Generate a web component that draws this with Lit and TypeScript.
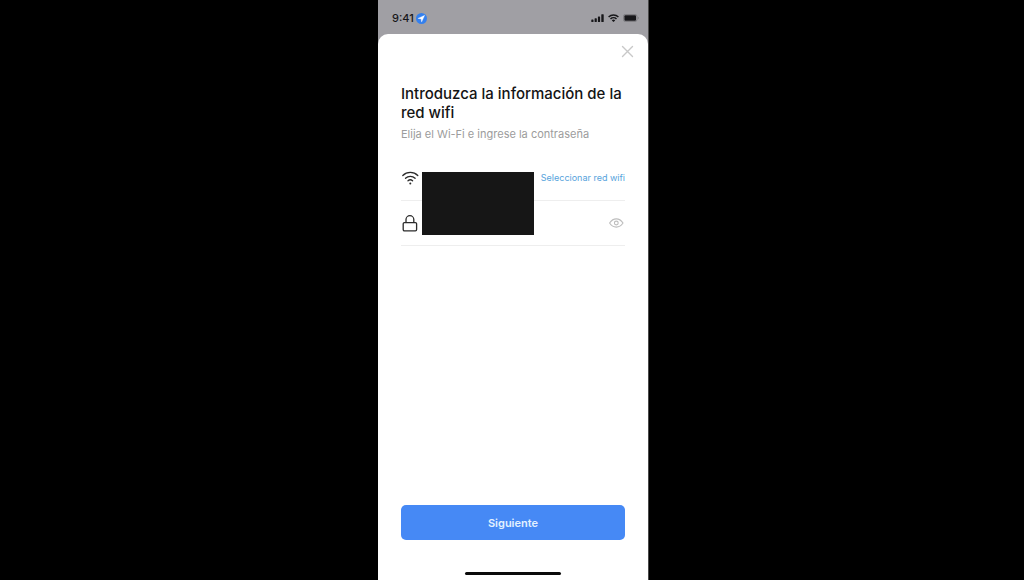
import { LitElement, html, css } from "lit";
import { customElement, state } from "lit/decorators.js";

@customElement("status-bar")
class StatusBar extends LitElement {
  static styles = css`
    :host {
      display: flex;
      align-items: center;
      height: 34px;
      padding: 2px 9px 0 14px;
      box-sizing: border-box;
      color: #17171a;
    }
    .time {
      font-size: 11px;
      line-height: 14px;
      font-weight: 500;
    }
    .location {
      margin-left: 2px;
    }
    .signals {
      display: flex;
      align-items: center;
      gap: 4px;
      margin-left: auto;
    }
    svg {
      display: block;
    }
  `;

  render() {
    return html`
      <span class="time">9:41</span>
      <svg class="location" width="11" height="11" viewBox="0 0 11 11" aria-hidden="true">
        <circle cx="5.5" cy="5.5" r="5.5" fill="#3480ee" />
        <path d="M8.7 2.3 1.9 5.4l3.2.5.5 3.2z" fill="#fff" stroke="#fff" stroke-width="0.3" />
      </svg>
      <div class="signals">
        <svg width="13" height="8" viewBox="0 0 13 8" fill="currentColor" aria-hidden="true">
          <rect x="0.3" y="5.4" width="2.2" height="2.6" rx="0.6" />
          <rect x="3.6" y="4.2" width="2.2" height="3.8" rx="0.6" />
          <rect x="6.9" y="2.4" width="2.2" height="5.6" rx="0.6" />
          <rect x="10.3" y="0.2" width="2.4" height="7.8" rx="0.6" />
        </svg>
        <svg width="11" height="8" viewBox="0 0 11 8" fill="none" stroke="currentColor" stroke-width="1.5" aria-hidden="true">
          <path d="M.6 3a7 7 0 0 1 9.8 0M2.5 5a4.300 4.300 0 0 1 6 0" />
          <path d="M3.800 6.400a2.400 2.400 0 0 1 3.400 0L5.500 8z" fill="currentColor" stroke="none" />
        </svg>
        <svg width="16" height="8" viewBox="0 0 16 8" aria-hidden="true">
          <rect x="0.5" y="0.5" width="13.4" height="7" rx="1.8" fill="none" stroke="#77777b" stroke-width="0.8" />
          <rect x="1.4" y="1.3" width="11.6" height="5.4" rx="1" fill="currentColor" />
          <path d="M14.8 2.8v2.4q.9-.4.9-1.2t-.9-1.2" fill="#77777b" />
        </svg>
      </div>
    `;
  }
}

@customElement("wifi-form")
class WifiForm extends LitElement {
  static styles = css`
    :host {
      display: flex;
      flex-direction: column;
      flex: 1;
      box-sizing: border-box;
      border-radius: 10px 10px 0 0;
      background: #fff;
    }
    button,
    input {
      font: inherit;
      border: 0;
      padding: 0;
      margin: 0;
      background: none;
      color: inherit;
    }
    button {
      cursor: pointer;
    }
    svg {
      display: block;
    }
    .close {
      align-self: flex-end;
      margin: 11px 14px 0 0;
    }
    form {
      display: flex;
      flex-direction: column;
      flex: 1;
      padding: 26px 23px 0;
    }
    h1 {
      margin: 0;
      font-size: 15px;
      line-height: 19px;
      font-weight: 500;
      color: #141414;
    }
    .hint {
      margin: 5px 0 0;
      font-size: 11px;
      line-height: 14px;
      color: #9c9c9c;
    }
    .fields {
      position: relative;
      margin-top: 15px;
    }
    .row {
      display: flex;
      align-items: center;
      height: 45px;
      box-sizing: border-box;
      border-bottom: 1px solid #eeeeee;
    }
    .row label {
      flex: none;
      color: #2b2b2b;
    }
    .row input {
      flex: 1;
      min-width: 0;
      margin: 0 6px;
      height: 24px;
      font-size: 11px;
      outline: none;
    }
    .select {
      flex: none;
      font-size: 9px;
      line-height: 12px;
      color: #57a3dc;
      text-decoration: none;
    }
    .redacted {
      position: absolute;
      left: 21px;
      top: 16px;
      width: 112px;
      height: 63px;
      background: #161616;
    }
    .next {
      height: 35px;
      margin-top: auto;
      border-radius: 5px;
      background: #4689f5;
      color: #e2f1ff;
      font-size: 11px;
      font-weight: 600;
    }
    .home {
      width: 96px;
      height: 3px;
      margin: 32px auto 5px;
      border-radius: 2px;
      background: #0b0b0b;
    }
  `;

  @state() private revealed = false;

  render() {
    return html`
      <button class="close" type="button" aria-label="Cerrar">
        <svg width="13" height="13" viewBox="0 0 13 13" fill="none" stroke="#c8c8c8" stroke-width="1.4" stroke-linecap="round">
          <path d="m1.500 1.500 10 10m0-10-10 10" />
        </svg>
      </button>
      <form @submit=${(e: Event) => e.preventDefault()}>
        <h1>Introduzca la información de la red wifi</h1>
        <p class="hint">Elija el Wi-Fi e ingrese la contraseña</p>
        <div class="fields">
          <div class="row">
            <label for="network" aria-label="Red wifi">
              <svg width="18" height="14" viewBox="0 0 18 14" fill="none" stroke="currentColor" stroke-width="1.3" stroke-linecap="round">
                <path d="M1.8 4.500a10.600 10.600 0 0 1 15 0M4.500 7.300a6.800 6.800 0 0 1 9.600 0M7 9.800a3.500 3.500 0 0 1 4.600 0" />
                <circle cx="9.300" cy="12.500" r="1" fill="currentColor" stroke="none" />
              </svg>
            </label>
            <input id="network" type="text" />
            <a class="select" href="#redes">Seleccionar red wifi</a>
          </div>
          <div class="row">
            <label for="password" aria-label="Contraseña">
              <svg width="18" height="18" viewBox="0 0 18 18" fill="none" stroke="currentColor" stroke-width="1.3">
                <rect x="2.200" y="8.600" width="13.400" height="8.200" rx="1.200" />
                <path d="M5 8.400V5.600a3.900 3.900 0 0 1 7.800 0v2.800" />
              </svg>
            </label>
            <input id="password" type=${this.revealed ? "text" : "password"} />
            <button
              type="button"
              aria-label="Mostrar contraseña"
              @click=${() => (this.revealed = !this.revealed)}
            >
              <svg width="16" height="10" viewBox="0 0 16 10" fill="none" stroke="#bdbdbd" stroke-width="1.100">
                <path d="M.6 5C2.400 2.300 4.600.9 7.300.9S12.200 2.300 14 5C12.200 7.700 10 9.100 7.300 9.100S2.400 7.700.6 5z" />
                <circle cx="7.300" cy="5" r="1.900" />
              </svg>
            </button>
          </div>
          <div class="redacted"></div>
        </div>
        <button class="next" type="submit">Siguiente</button>
        <div class="home"></div>
      </form>
    `;
  }
}

@customElement("app-root")
class AppRoot extends LitElement {
  static styles = css`
    :host {
      display: flex;
      justify-content: center;
      min-height: 100vh;
      padding-left: 2px;
      box-sizing: border-box;
      background: #000;
      font-family: Inter, "Liberation Sans", sans-serif;
    }
    .phone {
      display: flex;
      flex-direction: column;
      width: 100%;
      max-width: 270px;
      background: #a09fa4;
      box-shadow: 1px 0 #4a4a4a;
    }
  `;

  render() {
    return html`
      <main class="phone">
        <status-bar></status-bar>
        <wifi-form></wifi-form>
      </main>
    `;
  }
}
